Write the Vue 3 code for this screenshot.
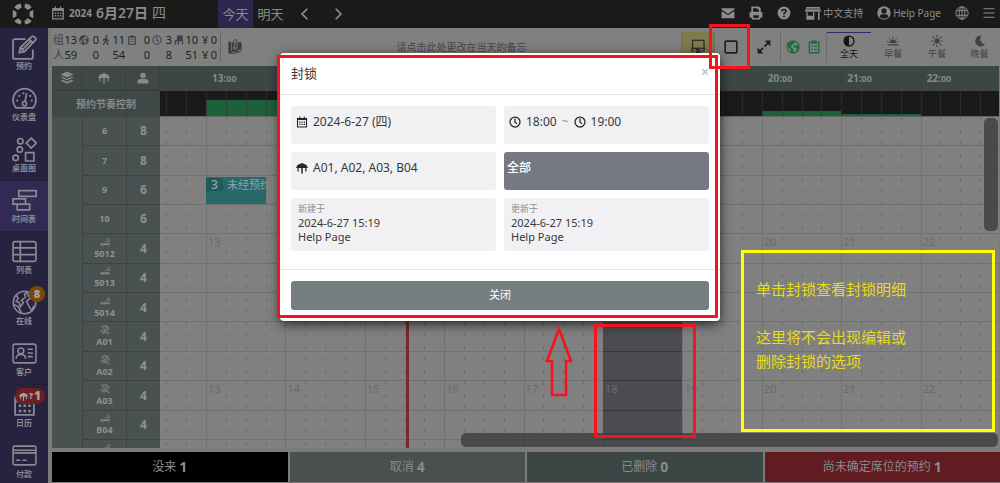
<script setup>
const icons = {
  logo: '<path fill="#8c8c8c" d="M5 2 9.500.5 10.500 4.500 6.500 7.500 2.500 4.500ZM19 2 14.500.5 13.500 4.500 17.500 7.500 21.500 4.500ZM5 22 9.500 23.500 10.500 19.500 6.500 16.500 2.500 19.500ZM19 22 14.500 23.500 13.500 19.500 17.500 16.500 21.500 19.500ZM.8 7.500 4.800 9.500V14.500L.8 16.500ZM23.200 7.500 19.200 9.500V14.500L23.200 16.500Z"/>',
  calendar: '<path fill="none" stroke="currentColor" stroke-width="2.200" d="M3 5h18v17H3zM3 6.500h18M7.500 1v5M16.500 1v5"/><path fill="currentColor" d="M3 4h18v4H3zM6.500 11h2.500v2.500H6.500zM11 11h2.500v2.500H11zM15.500 11H18v2.500h-2.500zM6.500 15.500h2.500V18H6.500zM11 15.500h2.500V18H11zM15.500 15.500H18V18h-2.500z"/>',
  left: '<path fill="none" stroke="currentColor" stroke-width="3" d="M16 3 7 12l9 9"/>',
  right: '<path fill="none" stroke="currentColor" stroke-width="3" d="m8 3 9 9-9 9"/>',
  mail: '<path fill="currentColor" d="M1 4h22v2L12 13.500 1 6zM1 8.500l11 7.500 11-7.500V21H1z"/>',
  print: '<path fill="currentColor" fill-rule="evenodd" d="M4 1h13l3 3v6h1q2 0 2 2v8h-4v3H5v-3H1v-8q0-2 2-2h1zM7 4v6h10V6h-3V4zM7.500 16v4.500h9V16z"/>',
  help: '<circle cx="12" cy="12" r="11" fill="currentColor"/><path fill="none" stroke="#1a1a1a" stroke-width="2.800" d="M8.500 9.500q0-3.500 3.500-3.500t3.500 3q0 2-3.500 4v1.500"/><circle cx="12" cy="18" r="1.700" fill="#1a1a1a"/>',
  store: '<path fill="currentColor" fill-rule="evenodd" d="M2 3h20l2 7H0zM2 11h2v5h8v-5h2v11H2zM19.500 11H22v11h-2.500z"/><path d="M2 6h20" stroke="#1a1a1a" stroke-width="1"/>',
  account: '<circle cx="12" cy="12" r="11.500" fill="currentColor"/><circle cx="12" cy="8.500" r="4.500" fill="#1a1a1a"/><path fill="#1a1a1a" d="M4 18q2-4 5-4h6q3 0 5 4-3 4-8 4t-8-4"/>',
  web: '<g fill="none" stroke="currentColor" stroke-width="1.700"><circle cx="12" cy="12" r="10.500"/><ellipse cx="12" cy="12" rx="5" ry="10.500"/><path d="M12 1v22M2 8h20M2 16h20"/></g>',
  menu: '<path stroke="currentColor" stroke-width="2" d="M1 3.500h22M1 12h22M1 20.500h22"/>',
  edit: '<g fill="none" stroke="currentColor" stroke-width="1.700"><path d="M13 4H3Q1 4 1 6v15q0 2 2 2h15q2 0 2-2v-7"/><path d="m7 17 1-5L19 1.500q1-1 2 0l1.500 1.500q1 1 0 2L12 16zM16.500 4l3.500 3.500M8 12l4 4M10 14 18 6"/></g>',
  gauge: '<g fill="none" stroke="currentColor" stroke-width="1.600"><path d="M4 21A11 11 0 1 1 20 21Z"/><circle cx="12" cy="17" r="2"/><path d="M12.500 15 14 7"/></g><g fill="currentColor"><circle cx="5" cy="14" r="1.100"/><circle cx="7" cy="9.500" r="1.100"/><circle cx="11" cy="7" r="1.100"/><circle cx="17.500" cy="9.500" r="1.100"/><circle cx="19" cy="14" r="1.100"/></g>',
  shapes: '<g fill="none" stroke="currentColor" stroke-width="1.600"><circle cx="8" cy="4" r="2.600"/><circle cx="7.500" cy="12" r="2.600"/><circle cx="3.500" cy="20" r="2.600"/><path d="m18.500 1 4.800 4.800-4.800 4.800-4.800-4.800zM13 15h8v8h-8z"/></g>',
  timeline: '<path fill="none" stroke="currentColor" stroke-width="1.600" d="M6.500 2.500h16.700v5.500H6.500zM1 10.500h12v5H1zM5 15.500h12v5.500H5z"/>',
  list: '<g fill="none" stroke="currentColor" stroke-width="1.600"><rect x="1" y="2.500" width="22" height="19" rx="2"/><path d="M1 8.500h22M1 15h22M8 2.500v19"/></g>',
  globe: '<g fill="none" stroke="currentColor" stroke-width="1.500"><circle cx="12" cy="12" r="10.800"/><path d="M4 5l2 3-2 3 3 1 1 4 3-4-2-2 4-3-1-3 3-2M14 2l2 4 4-1M22 9l-5-1-3 3 2 4 3 5 2-5M2 14l4 2 3 6"/></g>',
  client: '<g fill="none" stroke="currentColor" stroke-width="1.500"><rect x="1" y="3" width="22" height="18" rx="2"/><circle cx="8.500" cy="9.500" r="2.800"/><path d="M4 17q0-4 4.500-4t4.500 4M15 8h5M15 11.500h5M15 15h5"/></g>',
  month: '<path fill="none" stroke="currentColor" stroke-width="1.700" d="M3 5h18v17H3zM3 9h18M7 2v4M17 2v4"/><path fill="currentColor" d="M6.500 12H9v2.500H6.500zM11 12h2.500v2.500H11zM15.500 12H18v2.500h-2.500zM6.500 17H9v2.500H6.500zM11 17h2.500v2.500H11zM15.500 17H18v2.500h-2.500z"/>',
  card: '<g fill="none" stroke="currentColor" stroke-width="1.500"><rect x="1" y="3" width="22" height="18" rx="1.500"/><path d="M1 7h22M1 9.500h22M4 16.500h4M10 16.500h4"/></g>',
  earth: '<circle cx="12" cy="12" r="11.500" fill="currentColor"/><path fill="#808080" d="M15 3l6 4-3 3-4-1-2 3 4 1 3 2-3 6-3-1-1-5-4-3 2-4 4-2zM2 10l3 4 3 2-1 5-4-5z"/>',
  walk: '<circle cx="13" cy="3" r="2.800" fill="currentColor"/><path fill="none" stroke="currentColor" stroke-width="3.400" d="m12 7-1 8 4 3 2 6M11 14l-2 5-4 5M12 8l-5 2-1 4M13 8l2 4 4 2"/>',
  clipboard: '<path fill="none" stroke="currentColor" stroke-width="2.500" d="M4 4h16v18H4z"/><path fill="currentColor" d="M8 1h8v6H8zM7 10h3v2H7zM12 10h5v2h-5zM7 15h3v2H7zM12 15h5v2h-5z"/>',
  clock: '<circle cx="12" cy="12" r="10" fill="none" stroke="currentColor" stroke-width="2.500"/><path fill="none" stroke="currentColor" stroke-width="2.500" d="M12 5v7.500l4 3"/>',
  seat: '<path fill="currentColor" d="M7 1h14v13h1v9h-3v-8h-7v8H9v-8H5v8H2V12h5z"/>',
  memo: '<path fill="currentColor" fill-rule="evenodd" d="M2 4h4v13q0 3 3 3h5v2H4q-2 0-2-2zM7 5h2v8q1 4 5 3l2-2V5h6v11h-5v5H9q-2 0-2-2z"/><path fill="currentColor" d="M18.500 17.500H22l-3.500 3.500z"/><path fill="none" stroke="currentColor" stroke-width="1.500" d="M10 12V4q0-3 2.500-3T15 4v9q-1 2-2.500 1V5"/>',
  board: '<path fill="none" stroke="currentColor" stroke-width="1.600" d="M4 2h17v12H4zM2 14h21M3 14v4h4M21 14v4h-4"/><path fill="none" stroke="currentColor" stroke-width="1.800" d="m8 14 3 3-2 6M11 15l2 8M13 15l4 8"/>',
  square: '<rect x="2" y="2" width="20" height="20" rx="1.500" fill="none" stroke="currentColor" stroke-width="2.800"/>',
  expand: '<path fill="currentColor" d="M13 1h10v10zM1 13v10h10z"/><path fill="none" stroke="currentColor" stroke-width="3" stroke-dasharray="9.500 3" d="M4 20 20 4"/>',
  half: '<circle cx="12" cy="12" r="10" fill="none" stroke="currentColor" stroke-width="2.500"/><path fill="currentColor" d="M12 2a10 10 0 0 0 0 20z"/>',
  sunrise: '<path fill="currentColor" d="M5 16a7 7 0 0 1 14 0zM1 18.500h22V21H1z"/><path stroke="currentColor" stroke-width="2" d="M12 3v4M4 6l3 3M20 6l-3 3M0 13h3M21 13h3"/>',
  sun: '<circle cx="12" cy="12" r="5.500" fill="currentColor"/><path stroke="currentColor" stroke-width="2.400" d="M12 0v4M12 20v4M0 12h4M20 12h4M3.500 3.500l3 3M17.500 17.500l3 3M20.500 3.500l-3 3M6.500 17.500l-3 3"/>',
  moon: '<path fill="currentColor" d="M15 1A11 11 0 1 0 22 19 11 11 0 0 1 15 1"/>',
  layers: '<path fill="currentColor" d="m12 1 11 5-11 5L1 6zM1 11l3-1 8 3.500L20 10l3 1-11 5zM1 16.500l3-1.500 8 3.500 8-3.500 3 1.500L12 22z"/>',
  table: '<path fill="currentColor" d="M3 6 12 2l9 4 3 6H21v7h-2.500v-7H13.500v11h-3V12H5.500v7H3v-7H0z"/>',
  person: '<circle cx="12" cy="7" r="5.500" fill="currentColor"/><path fill="currentColor" d="M1 23v-3q0-6 6-6h10q6 0 6 6v3z"/>',
  smoke: '<path fill="currentColor" d="M1 15h22v5H1z"/><path fill="none" stroke="currentColor" stroke-width="2" d="M12 11h5q4 0 4-3t-4-3M20 3q3 2 2 10"/>',
  nosmoke: '<path fill="none" stroke="currentColor" stroke-width="2.500" d="M3 2l19 20M3 11q0 8 8 9M7 2h7q8 2 7 11M8 12q2 5 7 6M12 5q5 1 5 7"/>',
}

const START = 12.42
const SPAN = 10.567
const left = (h) => ((h - START) / SPAN) * 100 + '%'
const width = (d) => (d / SPAN) * 100 + '%'

const nav = [
  { icon: 'edit', label: '预约' },
  { icon: 'gauge', label: '仪表盘' },
  { icon: 'shapes', label: '桌面图' },
  { icon: 'timeline', label: '时间表', active: true },
  { icon: 'list', label: '列表' },
  { icon: 'globe', label: '在线', badge: '8' },
  { icon: 'client', label: '客户' },
  { icon: 'month', label: '日历', alert: '1' },
  { icon: 'card', label: '付款' },
]
const stats = [
  { label: '组', top: '13', bottom: '59', under: '人' },
  { icon: 'earth', top: '0', bottom: '0' },
  { icon: 'walk', top: '11', bottom: '54' },
  { icon: 'clipboard', top: '0', bottom: '0' },
  { icon: 'clock', top: '3', bottom: '8' },
  { icon: 'seat', top: '10', bottom: '51' },
  { label: '¥', top: '0', bottom: '0', under: '¥', money: true },
]
const meals = [
  { icon: 'half', label: '全天', active: true },
  { icon: 'sunrise', label: '早餐' },
  { icon: 'sun', label: '午餐' },
  { icon: 'moon', label: '晚餐' },
]
const openHours = [13, 20, 21, 22]
const allHours = [13, 14, 15, 16, 17, 18, 19, 20, 21, 22]
const rows = [
  { name: '6', seats: 8 },
  { name: '7', seats: 8 },
  { name: '9', seats: 6 },
  { name: '10', seats: 6 },
  { name: '5012', seats: 4, icon: 'smoke', hints: openHours },
  { name: '5013', seats: 4, icon: 'smoke' },
  { name: '5014', seats: 4, icon: 'smoke' },
  { name: 'A01', seats: 4, icon: 'nosmoke', blocked: true },
  { name: 'A02', seats: 4, icon: 'nosmoke', blocked: true },
  { name: 'A03', seats: 4, icon: 'nosmoke', blocked: true, hints: allHours },
  { name: 'B04', seats: 4, icon: 'smoke', blocked: true },
  { name: '', seats: '', icon: 'smoke' },
]
const quarters = []
for (let q = 12.5; q < 22.9; q += 0.25) quarters.push(q)
const load = [
  { from: 13, span: 1, level: '64%' },
  { from: 20, span: 1, level: '20%' },
  { from: 21, span: 1, level: '8%' },
]
const totals = [
  { label: '没来', count: 1, kind: 'noshow' },
  { label: '取消', count: 4, kind: 'cancelled' },
  { label: '已删除', count: 0, kind: 'deleted' },
  { label: '尚未确定席位的预约', count: 1, kind: 'pending' },
]
</script>

<template>
  <div class="app">
    <header class="topbar">
      <a class="brand" href="#" aria-label="首页"><svg class="i22" viewBox="0 0 24 24" v-html="icons.logo"></svg></a>
      <button class="date">
        <svg class="i14" viewBox="0 0 24 24" v-html="icons.calendar"></svg>
        <b class="year">2024</b><b class="month">6月27日</b><span>四</span>
      </button>
      <button class="day on">今天</button>
      <button class="day">明天</button>
      <button class="step" aria-label="前一天"><svg class="i14" viewBox="0 0 24 24" v-html="icons.left"></svg></button>
      <button class="step" aria-label="后一天"><svg class="i14" viewBox="0 0 24 24" v-html="icons.right"></svg></button>
      <div class="tools">
        <button aria-label="邮件"><svg class="i14" viewBox="0 0 24 24" v-html="icons.mail"></svg></button>
        <button aria-label="打印"><svg class="i14" viewBox="0 0 24 24" v-html="icons.print"></svg></button>
        <button aria-label="帮助"><svg class="i14" viewBox="0 0 24 24" v-html="icons.help"></svg></button>
        <button><svg class="i16" viewBox="0 0 24 24" v-html="icons.store"></svg>中文支持</button>
        <button><svg class="i14" viewBox="0 0 24 24" v-html="icons.account"></svg>Help Page</button>
        <button aria-label="语言"><svg class="i14" viewBox="0 0 24 24" v-html="icons.web"></svg></button>
        <button aria-label="菜单"><svg class="i12" viewBox="0 0 24 24" v-html="icons.menu"></svg></button>
      </div>
    </header>

    <div class="shell">
      <nav class="side">
        <a v-for="n in nav" :key="n.label" href="#" :class="{ on: n.active }">
          <svg viewBox="0 0 24 24" v-html="icons[n.icon]"></svg>
          <span>{{ n.label }}</span>
          <b v-if="n.badge" class="badge">{{ n.badge }}</b>
          <b v-if="n.alert" class="badge alert"><svg viewBox="0 0 24 24" v-html="icons.table"></svg><small>?</small>{{ n.alert }}</b>
        </a>
      </nav>

      <main class="main">
        <section class="toolbar">
          <div class="stats">
            <div v-for="(s, i) in stats" :key="i" class="stat" :class="{ money: s.money }">
              <i><svg v-if="s.icon" viewBox="0 0 24 24" v-html="icons[s.icon]"></svg>{{ s.label }}</i><span>{{ s.top }}</span>
              <i>{{ s.under }}</i><span>{{ s.bottom }}</span>
            </div>
          </div>
          <button class="memo-icon" aria-label="备忘"><svg class="i16" viewBox="0 0 24 24" v-html="icons.memo"></svg></button>
          <input class="memo" aria-label="备忘" placeholder="请点击此处更改在当天的备忘" />
          <button class="tool yellow" aria-label="桌位"><svg class="i16" viewBox="0 0 24 24" v-html="icons.board"></svg></button>
          <button class="tool" aria-label="封锁"><svg class="i14" viewBox="0 0 24 24" v-html="icons.square"></svg></button>
          <button class="tool" aria-label="展开"><svg class="i14" viewBox="0 0 24 24" v-html="icons.expand"></svg></button>
          <div class="green">
            <button aria-label="在线"><svg class="i14" viewBox="0 0 24 24" v-html="icons.earth"></svg></button>
            <button aria-label="清单"><svg class="i14" viewBox="0 0 24 24" v-html="icons.clipboard"></svg></button>
          </div>
          <div class="meals">
            <button v-for="m in meals" :key="m.label" :class="{ on: m.active }">
              <svg class="i12" viewBox="0 0 24 24" v-html="icons[m.icon]"></svg>{{ m.label }}
            </button>
          </div>
        </section>

        <section class="schedule">
          <div class="heads">
            <span><svg class="i14" viewBox="0 0 24 24" v-html="icons.layers"></svg></span>
            <span><svg class="i12" viewBox="0 0 24 24" v-html="icons.table"></svg></span>
            <span><svg class="i12" viewBox="0 0 24 24" v-html="icons.person"></svg></span>
          </div>
          <div class="hours">
            <b v-for="h in openHours" :key="h" :style="{ left: left(h) }">{{ h }}:<small>00</small></b>
          </div>
          <div class="pace">预约节奏控制</div>
          <div class="load">
            <i v-for="l in load" :key="l.from" class="bar" :style="{ left: left(l.from), width: width(l.span), height: l.level }"></i>
            <i v-for="q in quarters" :key="q" class="mark" :style="{ left: left(q) }"></i>
          </div>
          <div class="names">
            <div v-for="(r, i) in rows" :key="i" class="name">
              <b><svg v-if="r.icon" viewBox="0 0 24 24" v-html="icons[r.icon]"></svg>{{ r.name }}</b>
              <strong>{{ r.seats }}</strong>
            </div>
          </div>
          <div class="canvas">
            <i v-for="q in quarters" :key="q" :class="q % 1 ? 'quarter' : 'hour'" :style="{ left: left(q) }"></i>
            <div class="lanes">
              <div v-for="(r, i) in rows" :key="i" class="lane">
                <i v-if="r.blocked" class="block" :style="{ left: left(18), width: width(1) }"></i>
                <span v-for="h in r.hints" :key="h" class="hint" :style="{ left: left(h) }">{{ h }}</span>
                <div v-if="r.name === '9'" class="booking" :style="{ left: left(13), width: width(0.75) }"><b>3</b>未经预约</div>
              </div>
            </div>
            <i class="now" :style="{ left: left(15.52) }"></i>
            <i class="scroll-y"></i>
            <i class="scroll-x"></i>
          </div>
        </section>

        <footer class="totals">
          <button v-for="t in totals" :key="t.label" :class="t.kind">{{ t.label }}<b>{{ t.count }}</b></button>
        </footer>
      </main>
    </div>

    <div class="dialog" role="dialog" aria-labelledby="dialog-title">
      <div class="dialog-head"><h2 id="dialog-title">封锁</h2><button aria-label="关闭窗口">×</button></div>
      <div class="dialog-body">
        <div class="field"><svg class="i12" viewBox="0 0 24 24" v-html="icons.calendar"></svg>2024-6-27 (四)</div>
        <div class="field">
          <svg class="i12" viewBox="0 0 24 24" v-html="icons.clock"></svg>18:00 <em>~</em>
          <svg class="i12" viewBox="0 0 24 24" v-html="icons.clock"></svg>19:00
        </div>
        <div class="field"><svg class="i12" viewBox="0 0 24 24" v-html="icons.table"></svg>A01, A02, A03, B04</div>
        <div class="field all">全部</div>
        <div class="stamp"><small>新建于</small><span>2024-6-27 15:19</span><span>Help Page</span></div>
        <div class="stamp"><small>更新于</small><span>2024-6-27 15:19</span><span>Help Page</span></div>
      </div>
      <div class="dialog-foot"><button>关闭</button></div>
    </div>

    <i class="frame frame-dialog"></i>
    <i class="frame frame-tool"></i>
    <i class="frame frame-block"></i>
    <svg class="arrow" viewBox="0 0 28 72"><path d="M14 4 26 36H21V70H7V36H2Z" fill="none" stroke="#f5141e" stroke-width="2.600" /></svg>
    <div class="callout">
      <p>单击封锁查看封锁明细</p>
      <p>这里将不会出现编辑或<br />删除封锁的选项</p>
    </div>
  </div>
</template>

<style>
body { background: #7b7b7b; }
</style>

<style scoped>
.app, .app * { box-sizing: border-box; }
.app {
  position: relative; display: flex; flex-direction: column; height: 100vh; overflow: hidden;
  font: 12px/1.3 "Noto Sans", "Noto Sans CJK SC", sans-serif; color: #222;
}
button { font: inherit; color: inherit; background: none; border: 0; padding: 0; margin: 0; display: flex; align-items: center; justify-content: center; }
a { color: inherit; text-decoration: none; }
i { font-style: normal; }
svg { display: block; flex: none; }
.i12 { width: 12px; height: 12px; }
.i14 { width: 14px; height: 14px; }
.i16 { width: 16px; height: 16px; }
.i22 { width: 22px; height: 22px; }

.topbar { height: 28px; flex: none; display: flex; align-items: stretch; background: #1a1a1a; color: #8c8c8c; }
.brand { width: 46px; display: flex; align-items: center; justify-content: center; }
.date { width: 172px; gap: 4px; padding: 0 0 2px 5px; justify-content: flex-start; font-size: 14px; }
.year { font-size: 10px; }
.month { font-weight: 600; }
.day { width: 35px; font-size: 13px; }
.day.on { background: #2d264d; }
.step { width: 33px; }
.tools { margin-left: auto; display: flex; gap: 14px; padding: 0 5px 2px 0; font-size: 10px; }
.tools button { gap: 2px; }

.shell { flex: 1; min-height: 0; display: flex; }
.side { width: 48px; flex: none; background: #26223f; overflow: hidden; color: #8b8993; }
.side a { position: relative; height: 51px; display: flex; flex-direction: column; align-items: center; padding-top: 7px; border-bottom: 1px solid #211e37; font-size: 8px; font-weight: 600; line-height: 12px; }
.side a > svg { width: 25px; height: 25px; }
.side a.on { background: #322a54; }
.badge { position: absolute; top: 3px; right: 3px; height: 16px; min-width: 16px; border-radius: 8px; background: #7c4705; color: #a5a3a0; font-size: 11px; line-height: 16px; text-align: center; }
.badge.alert { display: flex; align-items: center; gap: 1px; padding: 0 4px; background: #6d1f26; font-size: 12px; }
.badge.alert svg { width: 9px; height: 9px; }
.badge small { font-size: 8px; }

.main { flex: 1; min-width: 0; display: flex; flex-direction: column; padding-left: 4px; }
.toolbar { height: 38px; flex: none; display: flex; padding: 4px 0; background: #808080; color: #1f1f1f; }
.stats { display: grid; grid-template-columns: 25px 22px 26px 25px 22px 26px 19px; padding-right: 3px; border-right: 1px solid #666; font-size: 11px; line-height: 15px; }
.stat { display: grid; grid-template-columns: 1fr auto; align-content: center; }
.stat i { display: flex; align-items: center; justify-content: flex-start; padding-left: 1px; color: #3c3f46; }
.stat.money i { padding-left: 4px; color: inherit; }
.stat svg { width: 10px; height: 10px; margin-left: 1px; }
.memo-icon { width: 27px; color: #393c44; }
.memo { flex: 1; min-width: 0; border: 0; padding: 0 6px 0 0; background: none; font: 10px "Noto Sans", "Noto Sans CJK SC", sans-serif; text-align: center; outline: 0; }
.memo::placeholder { color: #484848; opacity: 1; }
.tool { width: 33px; border-left: 1px solid #6e6e6e; }
.tool.yellow { background: #7d7a4b; }
.green { display: flex; gap: 7px; padding: 0 5px; border: solid #6b6b6b; border-width: 0 1px; color: #1d6b3e; }
.meals { display: grid; grid-template-columns: 44px 44px 44px 41px; color: #40424a; font-size: 9px; line-height: 12px; }
.meals button { flex-direction: column; justify-content: flex-start; gap: 1px; padding-top: 2px; border-top: 1px solid transparent; }
.meals .on { color: #151515; border-top-color: #322a6a; }

.schedule { flex: 1; min-height: 0; display: grid; grid-template-columns: 108px minmax(0, 1fr); grid-template-rows: 25px 26px minmax(0, 1fr); margin-right: 1px; }
.heads { display: grid; grid-template-columns: 30px 44px 34px; background: #3f4847; color: #858a8a; border-bottom: 1px solid #343d3c; }
.heads span { display: flex; align-items: center; justify-content: center; border-right: 1px solid #384140; }
.hours { position: relative; background: #3c4645; color: #858a8a; overflow: hidden; }
.hours b { position: absolute; top: 0; bottom: 0; padding-left: 5px; border-left: 1px solid #384140; font-size: 10px; line-height: 25px; }
.hours small { font-size: 9px; }
.pace { display: flex; align-items: center; justify-content: center; background: #3f4847; color: #858a8a; font-weight: bold; font-size: 10px; }
.load { position: relative; background: #1a1a1a; overflow: hidden; border-bottom: 1px solid #5f6363; }
.load .bar { position: absolute; bottom: 0; background: #1d613a; }
.load .mark { position: absolute; top: 0; bottom: 0; width: 1px; background: #323433; opacity: .7; }
.names, .lanes { display: grid; grid-template-rows: repeat(11, minmax(0, 29fr)) minmax(0, 8fr); overflow: hidden; }
.names { background: #4a5251; padding-left: 30px; color: #8d9191; }
.name { display: grid; grid-template-columns: 44px 34px; border-bottom: 1px solid #3b4241; overflow: hidden; }
.name:last-child { border: 0; }
.name b, .name strong { display: flex; flex-direction: column; align-items: center; justify-content: center; border: solid #3b4241; border-width: 0 0 0 1px; }
.name b { gap: 1px; font-size: 9px; line-height: 12px; }
.name svg { width: 10px; height: 10px; color: #7f8484; }
.name:last-child b { justify-content: flex-start; padding-top: 3px; }
.name strong { font-size: 12px; }
.canvas { position: relative; background: #808080; overflow: hidden; }
.lanes { position: absolute; inset: 0; }
.lane { position: relative; border-bottom: 1px solid #707070; }
.lane:last-child { border: 0; }
.hour, .quarter { position: absolute; top: 0; bottom: 0; width: 1px; }
.hour { background: #717171; }
.quarter { background: repeating-linear-gradient(transparent 0 1px, #686868 1px 4px, transparent 4px 12px); }
.hint { position: absolute; top: 1px; padding-left: 2px; color: #6a6a6a; font-size: 11px; }
.block { position: absolute; inset: 0 auto -1px; background: #4b4c51; border-bottom: 1px solid #36373d; }
.booking { position: absolute; top: 1px; bottom: 0; background: #27686b; color: #8fa3a4; font-size: 11px; line-height: 15px; white-space: nowrap; overflow: hidden; }
.booking b { display: inline-block; width: 17px; height: 13px; margin-right: 4px; background: #215a5d; color: #9da6a6; font-size: 12px; font-weight: 500; line-height: 13px; text-align: center; }
.now { position: absolute; top: 0; bottom: 0; width: 3px; background: #762b2f; }
.scroll-y, .scroll-x { position: absolute; background: rgba(60, 60, 60, .8); border-radius: 5px; }
.scroll-y { top: 1px; right: 1px; width: 14px; height: 34%; }
.scroll-x { right: 1px; bottom: 1px; width: 64%; height: 14px; }

.totals { height: 35px; flex: none; display: grid; grid-template-columns: repeat(4, minmax(0, 1fr)); gap: 2px; padding: 4px 0 1px; color: #8b8b8b; font-size: 12px; }
.totals button { gap: 3px; }
.totals b { font-size: 14px; }
.noshow { background: #000; }
.cancelled { background: #4a504f; }
.deleted { background: #3c4645; }
.pending { background: #611c21; }

.dialog { position: absolute; top: 53px; left: 50%; width: 440px; margin-left: -220px; background: #fff; border-radius: 4px; box-shadow: 0 3px 12px rgba(0, 0, 0, .7); color: #383838; }
.dialog-head { height: 42px; padding: 0 11px; display: flex; align-items: center; justify-content: space-between; border-bottom: 1px solid #e3e3e5; }
.dialog-head h2 { margin: 0; font-size: 13px; font-weight: 400; }
.dialog-head button { color: #c4c4c4; font-size: 14px; line-height: 14px; font-weight: bold; margin-bottom: 4px; }
.dialog-body { display: grid; grid-template-columns: 1fr 1fr; gap: 8px; padding: 11px 11px 18px; }
.field { height: 38px; display: flex; align-items: center; gap: 5px; padding: 0 5px 6px; background: #f1f1f3; border-radius: 3px; font-size: 12px; }
.field svg { color: #262626; }
.field em { font-style: normal; color: #999; }
.field.all { background: #767984; color: #fff; font-weight: 500; padding-left: 3px; }
.stamp { height: 53px; display: flex; flex-direction: column; padding: 4px 7px; background: #f1f1f3; border-radius: 3px; font-size: 11px; line-height: 14px; }
.stamp small { color: #8b8d9a; font-size: 9px; }
.dialog-foot { padding: 11px; border-top: 1px solid #e3e3e5; }
.dialog-foot button { width: 100%; height: 29px; background: #767f80; color: #fff; border-radius: 3px; font-size: 11px; }

.frame { position: absolute; border: 3px solid #f5141e; pointer-events: none; }
.frame-dialog { left: 277px; top: 55px; width: 441px; height: 263px; }
.frame-tool { left: 709px; top: 24px; width: 41px; height: 45px; }
.frame-block { left: 594px; top: 324px; width: 102px; height: 114px; }
.arrow { position: absolute; left: 545px; top: 325px; width: 28px; height: 72px; }
.callout { position: absolute; left: 741px; top: 250px; width: 254px; height: 182px; padding: 24px 12px; border: 3px solid #ff0; color: #e6dc1a; font-size: 15px; line-height: 24px; }
.callout p { margin: 0 0 24px; }
</style>
